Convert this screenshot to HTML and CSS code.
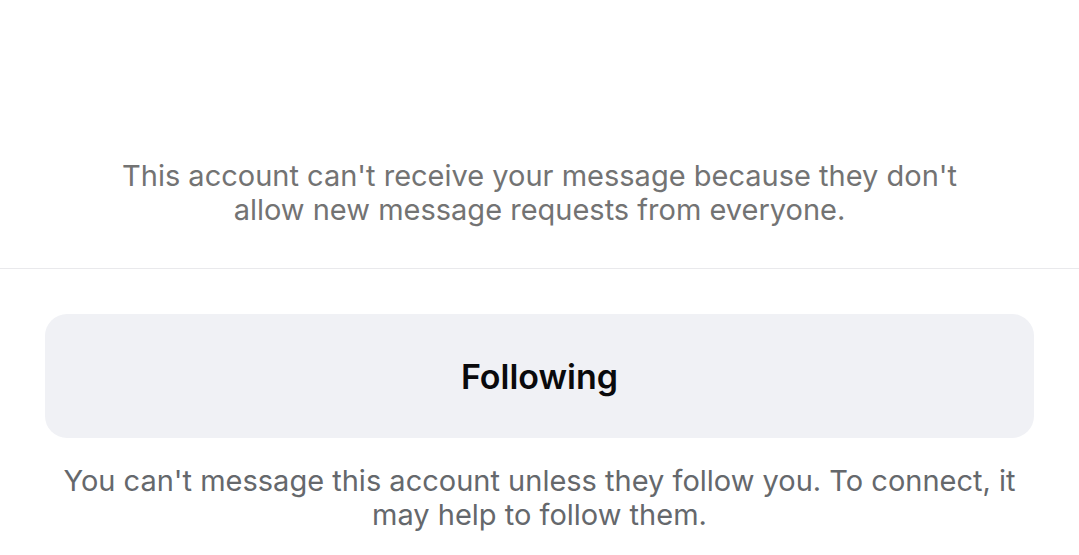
FILE: index.html
```html
<!DOCTYPE html>
<html>
<head>
<meta charset="utf-8">
<link rel="stylesheet" href="styles.css">
</head>
<body>
<div class="page">
  <div class="notice">
    <p class="notice-text">This account can't receive your message because they don't<br>allow new message requests from everyone.</p>
  </div>
  <div class="actions">
    <button class="follow-btn">Following</button>
    <p class="hint">You can't message this account unless they follow you. To connect, it<br>may help to follow them.</p>
  </div>
</div>
</body>
</html>
```
FILE: styles.css
```css
* { box-sizing: border-box; }
html, body { margin: 0; padding: 0; background: #ffffff; }
body { font-family: Inter, "Noto Sans", sans-serif; width: 1079px; height: 555px; overflow: hidden; }
.page { display: flex; flex-direction: column; }
.notice {
  padding-top: 159px;
  height: 269px;
  border-bottom: 1px solid #e9e9ec;
}
.notice-text {
  margin: 0;
  text-align: center;
  color: #737373;
  font-size: 29px;
  line-height: 34px;
}
.actions {
  padding: 45px 45px 0 45px;
  display: flex;
  flex-direction: column;
}
.follow-btn {
  height: 124px;
  width: 989px;
  border: none;
  border-radius: 22px;
  background: #f0f1f5;
  color: #0a0a0c;
  font-family: Inter, "Noto Sans", sans-serif;
  font-weight: 600;
  font-size: 34px;
  padding: 0;
}
.hint {
  margin: 26px 0 0 0;
  text-align: center;
  color: #65686c;
  font-size: 29px;
  line-height: 34px;
}
```
